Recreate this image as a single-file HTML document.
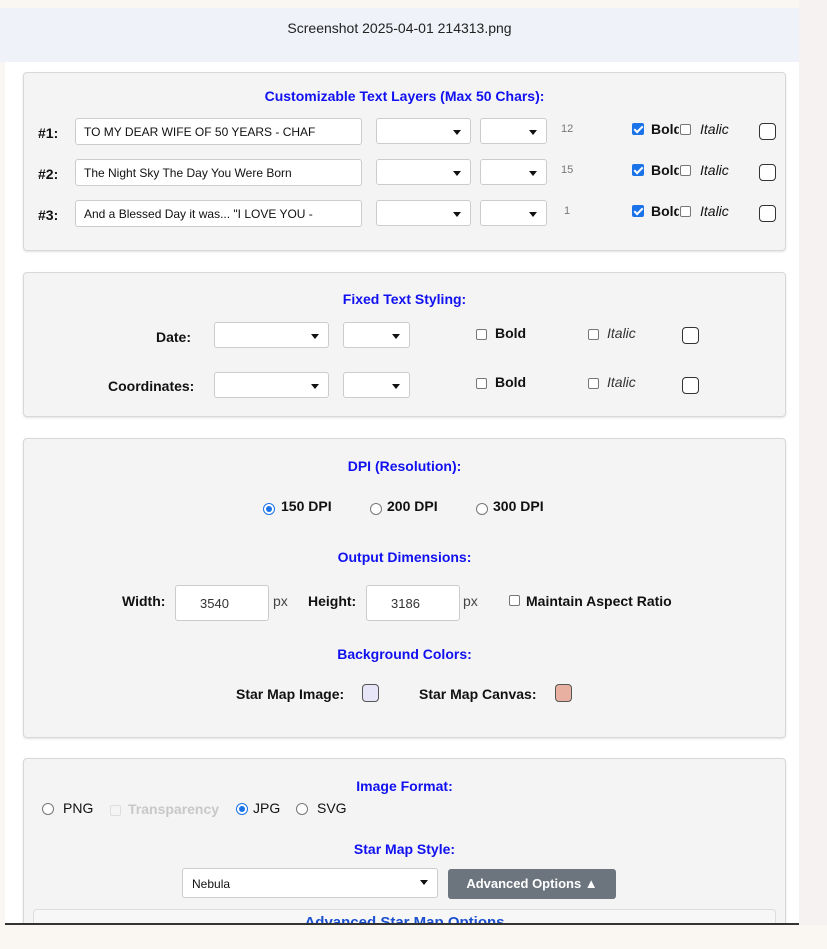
<!DOCTYPE html><html><head><style>
*{box-sizing:border-box;margin:0;padding:0}
body{width:827px;height:949px;background:#faf6f2;position:relative;overflow:hidden;font-family:"Liberation Sans",Arial,sans-serif;color:#111}
.a{position:absolute}
.panel{position:absolute;left:23px;width:763px;background:#f4f4f4;border:1px solid #d8d8d8;border-radius:4px;box-shadow:0 1px 2px rgba(0,0,0,.12)}
.h{position:absolute;color:#1010f0;font-weight:bold;font-size:14px;text-align:center;width:100%;left:0}
.in{position:absolute;background:#fff;border:1px solid #ccc;border-radius:3px;font-size:12px;padding-left:8px;display:flex;align-items:center;white-space:nowrap;overflow:hidden}
.sel{position:absolute;background:#fff;border:1px solid #ccc;border-radius:3px;height:26px}
.sel:after{content:"";position:absolute;right:9px;top:11px;border:4px solid transparent;border-top:5px solid #111;border-bottom:0}
.b{font-weight:bold;font-size:14px}
.cb{position:absolute;width:11px;height:11px;border:1px solid #777;border-radius:2px;background:#fff}
.cbc{position:absolute;width:12px;height:12px;border-radius:2px;background:#1a73e8}
.cbc:after{content:"";position:absolute;left:4px;top:1px;width:3px;height:7px;border:solid #fff;border-width:0 2px 2px 0;transform:rotate(45deg)}
.big{position:absolute;width:17px;height:17px;border:1.5px solid #333;border-radius:4px;background:#fff}
.r{position:absolute;width:12px;height:12px;border:1px solid #777;border-radius:50%;background:#fff}
.rc{position:absolute;width:12px;height:12px;border-radius:50%;border:1px solid #1a73e8;background:#fff}
.rc:after{content:"";position:absolute;left:2px;top:2px;width:6px;height:6px;border-radius:50%;background:#1a73e8}
</style></head><body>
<div class="a" style="left:0;top:8px;width:799px;height:54px;background:#eff2f8"></div>
<div class="a" style="left:799px;top:0;width:28px;height:925px;background:#f6f2f2"></div>
<div class="a" style="left:0;top:20px;width:799px;text-align:center;font-size:14px;color:#222">Screenshot 2025-04-01 214313.png</div>
<div class="a" style="left:5px;top:62px;width:794px;height:862px;background:#fff"></div>

<div class="panel" style="top:72px;height:179px">
<div class="h" style="top:15px">Customizable Text Layers (Max 50 Chars):</div>
</div>
<div class="a b" style="left:38px;top:125px">#1:</div>
<div class="a b" style="left:38px;top:166px">#2:</div>
<div class="a b" style="left:38px;top:207px">#3:</div>
<div class="in" style="left:75px;top:118px;width:287px;height:27px">TO MY DEAR WIFE OF 50 YEARS - CHAF</div>
<div class="in" style="left:75px;top:159px;width:287px;height:27px">The Night Sky The Day You Were Born</div>
<div class="in" style="left:75px;top:200px;width:287px;height:27px">And a Blessed Day it was... "I LOVE YOU -</div>
<div class="sel" style="left:376px;top:118px;width:95px"></div><div class="sel" style="left:480px;top:118px;width:67px"></div>
<div class="sel" style="left:376px;top:159px;width:95px"></div><div class="sel" style="left:480px;top:159px;width:67px"></div>
<div class="sel" style="left:376px;top:200px;width:95px"></div><div class="sel" style="left:480px;top:200px;width:67px"></div>
<div class="a" style="left:561px;top:123px;font-size:11px;color:#777">12</div>
<div class="a" style="left:561px;top:164px;font-size:11px;color:#777">15</div>
<div class="a" style="left:564px;top:205px;font-size:11px;color:#777">1</div>
<div class="cbc" style="left:632px;top:123px"></div><div class="a b" style="left:651px;top:121px;width:28px;overflow:hidden;white-space:nowrap">Bold</div><div class="cb" style="left:680px;top:124px"></div><div class="a" style="left:700px;top:121px;font-style:italic;font-size:14px">Italic</div><div class="big" style="left:759px;top:123px"></div>
<div class="cbc" style="left:632px;top:164px"></div><div class="a b" style="left:651px;top:162px;width:28px;overflow:hidden;white-space:nowrap">Bold</div><div class="cb" style="left:680px;top:165px"></div><div class="a" style="left:700px;top:162px;font-style:italic;font-size:14px">Italic</div><div class="big" style="left:759px;top:164px"></div>
<div class="cbc" style="left:632px;top:205px"></div><div class="a b" style="left:651px;top:203px;width:28px;overflow:hidden;white-space:nowrap">Bold</div><div class="cb" style="left:680px;top:206px"></div><div class="a" style="left:700px;top:203px;font-style:italic;font-size:14px">Italic</div><div class="big" style="left:759px;top:205px"></div>

<div class="panel" style="top:272px;height:145px">
<div class="h" style="top:18px">Fixed Text Styling:</div>
</div>
<div class="a b" style="left:156px;top:329px">Date:</div>
<div class="a b" style="left:108px;top:378px">Coordinates:</div>
<div class="sel" style="left:214px;top:322px;width:115px"></div><div class="sel" style="left:343px;top:322px;width:67px"></div>
<div class="sel" style="left:214px;top:372px;width:115px"></div><div class="sel" style="left:343px;top:372px;width:67px"></div>
<div class="cb" style="left:476px;top:329px"></div><div class="a b" style="left:495px;top:325px">Bold</div><div class="cb" style="left:588px;top:329px"></div><div class="a" style="left:607px;top:325px;font-style:italic;font-size:14px;color:#333">Italic</div><div class="big" style="left:682px;top:327px"></div>
<div class="cb" style="left:476px;top:378px"></div><div class="a b" style="left:495px;top:374px">Bold</div><div class="cb" style="left:588px;top:378px"></div><div class="a" style="left:607px;top:374px;font-style:italic;font-size:14px;color:#333">Italic</div><div class="big" style="left:682px;top:377px"></div>

<div class="panel" style="top:438px;height:300px">
<div class="h" style="top:19px">DPI (Resolution):</div>
<div class="h" style="top:110px">Output Dimensions:</div>
<div class="h" style="top:207px">Background Colors:</div>
</div>
<div class="rc" style="left:263px;top:503px"></div><div class="a b" style="left:281px;top:498px">150 DPI</div>
<div class="r" style="left:370px;top:503px"></div><div class="a b" style="left:387px;top:498px">200 DPI</div>
<div class="r" style="left:476px;top:503px"></div><div class="a b" style="left:493px;top:498px">300 DPI</div>
<div class="a b" style="left:122px;top:593px">Width:</div>
<div class="in" style="left:175px;top:585px;width:94px;height:36px;padding-left:24px;font-size:13px;color:#333">3540</div>
<div class="a" style="left:273px;top:593px;font-size:14px;color:#444">px</div>
<div class="a b" style="left:308px;top:593px">Height:</div>
<div class="in" style="left:366px;top:585px;width:94px;height:36px;padding-left:24px;font-size:13px;color:#333">3186</div>
<div class="a" style="left:463px;top:593px;font-size:14px;color:#444">px</div>
<div class="cb" style="left:509px;top:595px"></div><div class="a b" style="left:526px;top:593px">Maintain Aspect Ratio</div>
<div class="a b" style="left:236px;top:686px">Star Map Image:</div>
<div class="a" style="left:362px;top:684px;width:17px;height:18px;border:1.5px solid #555;border-radius:4px;background:#e6e6f8"></div>
<div class="a b" style="left:419px;top:686px">Star Map Canvas:</div>
<div class="a" style="left:555px;top:684px;width:17px;height:18px;border:1.5px solid #555;border-radius:4px;background:#e8b0a0"></div>

<div class="panel" style="top:758px;height:180px">
<div class="h" style="top:19px">Image Format:</div>
<div class="h" style="top:82px">Star Map Style:</div>
</div>
<div class="r" style="left:42px;top:803px"></div><div class="a" style="left:63px;top:800px;font-size:14px">PNG</div>
<div class="a" style="left:110px;top:805px;width:11px;height:11px;border:1px solid #ddd;border-radius:2px"></div><div class="a b" style="left:128px;top:801px;color:#c8c8c8">Transparency</div>
<div class="rc" style="left:236px;top:803px"></div><div class="a" style="left:253px;top:800px;font-size:14px">JPG</div>
<div class="r" style="left:296px;top:803px"></div><div class="a" style="left:317px;top:800px;font-size:14px">SVG</div>
<div class="sel" style="left:182px;top:868px;width:256px;height:30px;font-size:12px;padding:8px 0 0 9px">Nebula</div>
<div class="a" style="left:448px;top:869px;width:168px;height:30px;background:#6c757d;border-radius:3px;color:#fff;font-weight:bold;font-size:13px;text-align:center;line-height:30px">Advanced Options ▲</div>
<div class="a" style="left:33px;top:909px;width:743px;height:14px;background:#f7f7f7;border:1px solid #ddd;border-bottom:0;border-radius:4px 4px 0 0;overflow:hidden"><div style="text-align:center;color:#1a4fd0;font-weight:bold;font-size:15px;margin-top:4px">Advanced Star Map Options</div></div>
<div class="a" style="left:0;top:925px;width:827px;height:24px;background:#faf6f2"></div>
<div class="a" style="left:5px;top:923px;width:794px;height:2px;background:#333"></div>
</body></html>
